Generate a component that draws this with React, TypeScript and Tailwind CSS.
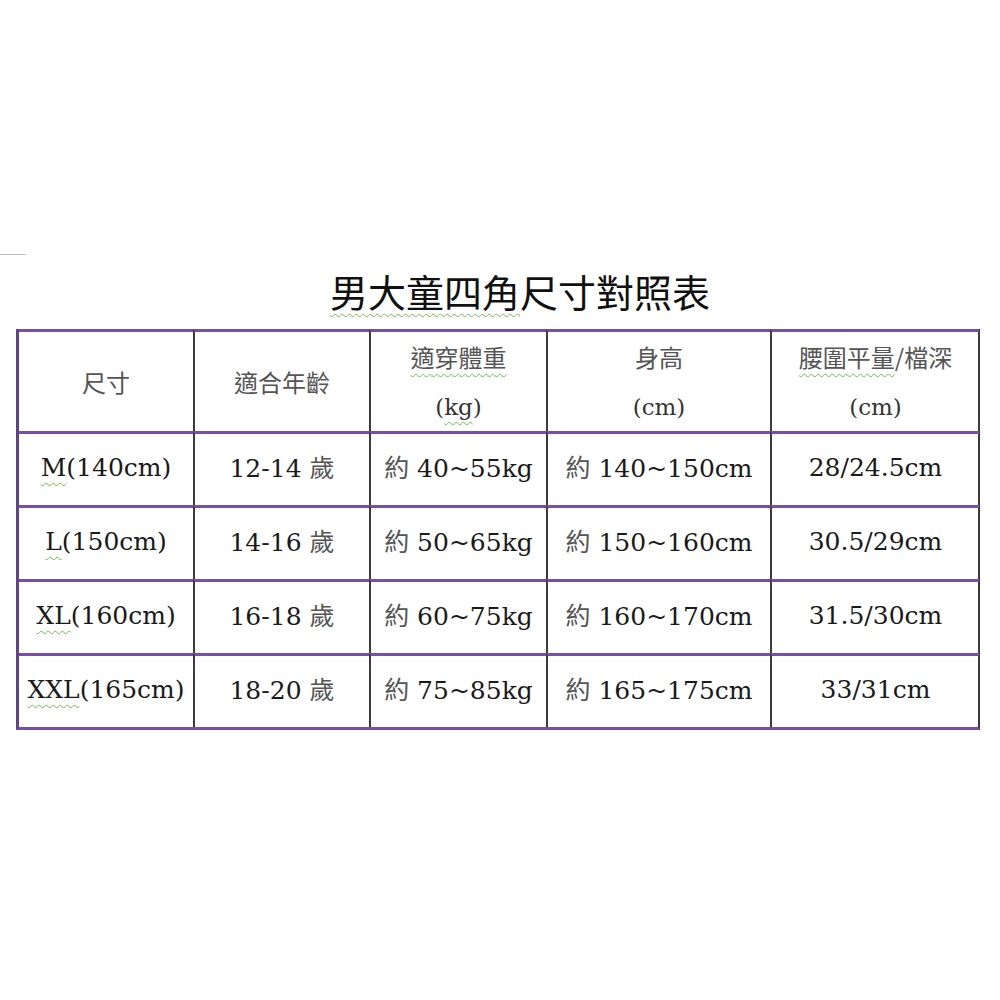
import React from "react";

const serif = "font-['DejaVu_Serif','Noto_Sans_CJK_TC',serif]";
const cjk = "font-['Noto_Sans_CJK_TC',sans-serif]";

const wavy = "underline decoration-wavy decoration-[#6bbf4a] decoration-1 underline-offset-[6px]";

type Row = { size: string; rest: string; age: string; weight: string; height: string; waist: string };

const rows: Row[] = [
  { size: "M", rest: "(140cm)", age: "12-14", weight: "40~55kg", height: "140~150cm", waist: "28/24.5cm" },
  { size: "L", rest: "(150cm)", age: "14-16", weight: "50~65kg", height: "150~160cm", waist: "30.5/29cm" },
  { size: "XL", rest: "(160cm)", age: "16-18", weight: "60~75kg", height: "160~170cm", waist: "31.5/30cm" },
  { size: "XXL", rest: "(165cm)", age: "18-20", weight: "75~85kg", height: "165~175cm", waist: "33/31cm" },
];

function Cell({ children, first }: { children: React.ReactNode; first?: boolean }) {
  return (
    <div
      className={`flex items-center justify-center border-t-[3px] border-t-[#7a4ea6] ${
        first ? "" : "border-l-2 border-l-[#3b3b3b]"
      } whitespace-nowrap`}
    >
      {children}
    </div>
  );
}

export default function App() {
  return (
    <div className="w-[1000px] h-[1000px] bg-white overflow-hidden">
      <div className="pt-[254px]">
        <div className="w-[26px] h-px bg-[#bdbdbd]" />
      </div>
      <div className={`mt-[14px] h-[60px] pl-[40px] flex justify-center text-[38px] leading-[44px] text-[#111] ${cjk}`}>
        <span>
          <span className={wavy}>男大童四角</span>尺寸對照表
        </span>
      </div>
      <div className="ml-[16px] w-[964px] border-l-[3px] border-l-[#5d4580] border-r-2 border-r-[#3b3b3b] border-b-[3px] border-b-[#7a4ea6]">
        <div className="grid grid-cols-[174px_176px_177px_224px_209px] grid-rows-[102px_74px_74px_74px_74px]">
          <Cell first>
            <span className={`text-[24px] text-[#555] ${cjk}`}>尺寸</span>
          </Cell>
          <Cell>
            <span className={`text-[24px] text-[#555] ${cjk}`}>適合年齡</span>
          </Cell>
          <Cell>
            <div className="flex flex-col items-center leading-[50px]">
              <span className={`text-[24px] text-[#555] ${cjk} ${wavy}`}>適穿體重</span>
              <span className={`text-[23px] text-[#333] ${serif}`}>
                (<span className={wavy}>kg</span>)
              </span>
            </div>
          </Cell>
          <Cell>
            <div className="flex flex-col items-center leading-[50px]">
              <span className={`text-[24px] text-[#555] ${cjk}`}>身高</span>
              <span className={`text-[23px] text-[#333] ${serif}`}>(cm)</span>
            </div>
          </Cell>
          <Cell>
            <div className="flex flex-col items-center leading-[50px]">
              <span className={`text-[24px] text-[#555] ${cjk}`}>
                <span className={wavy}>腰圍平量</span>/檔深
              </span>
              <span className={`text-[23px] text-[#333] ${serif}`}>(cm)</span>
            </div>
          </Cell>
          {rows.map((r) => (
            <React.Fragment key={r.size}>
              <Cell first>
                <span className={`pb-[4px] text-[25px] text-[#1a1a1a] ${serif}`}>
                  <span className={wavy}>{r.size}</span>
                  {r.rest}
                </span>
              </Cell>
              <Cell>
                <span className={`pb-[4px] text-[25px] text-[#1a1a1a] ${serif}`}>
                  {r.age} <span className={`text-[#555] ${cjk}`}>歲</span>
                </span>
              </Cell>
              <Cell>
                <span className={`pb-[4px] text-[25px] text-[#1a1a1a] ${serif}`}>
                  <span className={`text-[#555] ${cjk}`}>約</span> {r.weight}
                </span>
              </Cell>
              <Cell>
                <span className={`pb-[4px] text-[25px] text-[#1a1a1a] ${serif}`}>
                  <span className={`text-[#555] ${cjk}`}>約</span> {r.height}
                </span>
              </Cell>
              <Cell>
                <span className={`pb-[4px] text-[25px] text-[#1a1a1a] ${serif}`}>{r.waist}</span>
              </Cell>
            </React.Fragment>
          ))}
        </div>
      </div>
    </div>
  );
}
